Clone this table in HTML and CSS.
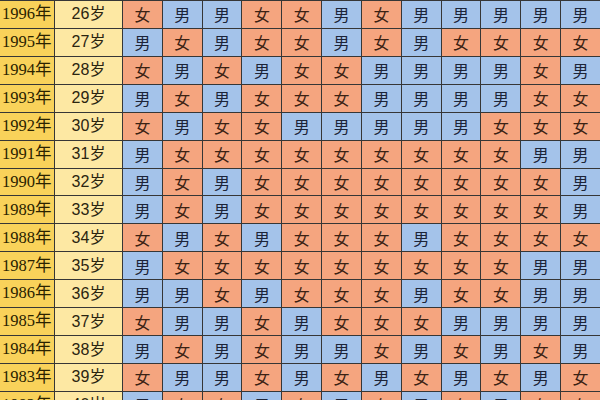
FILE: index.html
```html
<!DOCTYPE html>
<html lang="zh">
<head>
<meta charset="utf-8">
<link rel="stylesheet" href="styles.css">
</head>
<body>
<div class="chart" id="chart"></div>
<script>
var rows = [
  ["1996年","26岁","女男男女女男女男男男男男"],
  ["1995年","27岁","男女男女女男女男女女女女"],
  ["1994年","28岁","女男女男女女男男男男女男"],
  ["1993年","29岁","男女男女女女男男男男女女"],
  ["1992年","30岁","女男女女男男男男男女女女"],
  ["1991年","31岁","男女女女女女女女女女男男"],
  ["1990年","32岁","男女男女女女女女女女女男"],
  ["1989年","33岁","男女男女女女女女女女女男"],
  ["1988年","34岁","女男女男女女女男女女女女"],
  ["1987年","35岁","男女女女女女女女女女男男"],
  ["1986年","36岁","男男女男女女女男女女男男"],
  ["1985年","37岁","女男男女男女女女男男男男"],
  ["1984年","38岁","男女男女男男女男女男女男"],
  ["1983年","39岁","女男男女男女男女男女男女"],
  ["1982年","40岁","男女女男女男女男女男女女"]
];
var html = "";
rows.forEach(function (r) {
  html += '<div class="year">' + r[0] + '</div><div class="age">' + r[1] + '</div>';
  r[2].split("").forEach(function (c) {
    html += '<div class="cell ' + (c === "男" ? "boy" : "girl") + '">' + c + '</div>';
  });
});
document.getElementById("chart").innerHTML = html;
</script>
</body>
</html>
```
FILE: styles.css
```css
html, body {
  margin: 0;
  padding: 0;
  background: #ffffff;
  overflow: hidden;
}
.chart {
  display: grid;
  grid-template-columns: 54px 67px repeat(12, 1fr);
  grid-auto-rows: 26.93px;
  gap: 1px;
  padding-top: 1px;
  background: #363636;
  width: 600px;
  font-family: "Noto Sans CJK SC", sans-serif;
}
.chart > div {
  display: flex;
  align-items: center;
  justify-content: center;
  font-size: 16px;
  line-height: 1;
}
.year {
  background: #f9d25a;
  color: #2a2200;
  font-family: "Liberation Serif", "Noto Sans CJK SC", serif;
  font-size: 16.5px !important;
  justify-content: flex-start !important;
  padding-left: 2px;
}
.age {
  background: #fde8a3;
  color: #2a2410;
  font-family: "Liberation Sans", "Noto Sans CJK SC", sans-serif;
}
.boy {
  background: #a4c3ea;
  color: #1c2438;
}
.girl {
  background: #f5a57f;
  color: #3b2214;
}
```
